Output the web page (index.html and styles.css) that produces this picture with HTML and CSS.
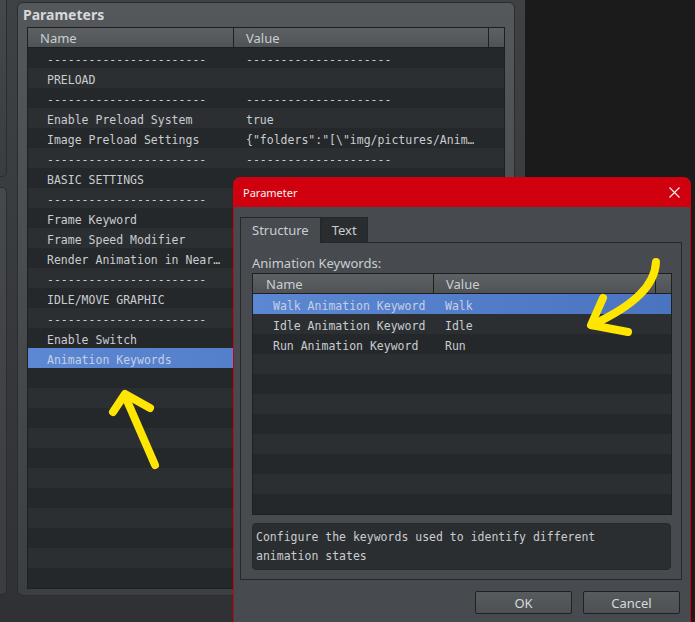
FILE: index.html
```html
<!DOCTYPE html>
<html lang="en">
<head>
    <meta charset="UTF-8">
    <meta name="viewport" content="width=device-width, initial-scale=1.0">
    <title>Plugin Parameters</title>
    <link rel="stylesheet" href="styles.css">
</head>
<body>
    <div class="app">
        <!-- Neighbouring panels, mostly off screen -->
        <div class="side">
            <div class="side-box side-top"></div>
            <div class="side-box side-bottom"></div>
        </div>

        <!-- Parameters group -->
        <div class="group">
            <div class="group-title">Parameters</div>
            <div class="grid main-grid">
                <div class="grid-head">
                    <div class="head-cell main-name">Name</div>
                    <div class="head-cell main-value">Value</div>
                    <div class="head-cell head-end"></div>
                </div>
                <div class="grid-body" id="paramRows"></div>
            </div>
        </div>
    </div>

    <!-- Parameter edit dialog -->
    <div class="dialog">
        <div class="dialog-title">
            <span>Parameter</span>
            <svg class="close" width="11" height="11" viewBox="0 0 11 11">
                <path d="M0.5 0.5 L10.5 10.5 M10.5 0.5 L0.5 10.5" stroke="#f4f4f4" stroke-width="1.1" fill="none"/>
            </svg>
        </div>
        <div class="dialog-body">
            <div class="tabs">
                <div class="tab active">Structure</div>
                <div class="tab">Text</div>
            </div>
            <div class="tab-pane">
                <div class="pane-label">Animation Keywords:</div>
                <div class="grid dialog-grid">
                    <div class="grid-head">
                        <div class="head-cell dlg-name">Name</div>
                        <div class="head-cell dlg-value">Value</div>
                        <div class="head-cell head-end"></div>
                    </div>
                    <div class="grid-body" id="keywordRows"></div>
                </div>
                <div class="description">Configure the keywords used to identify different<br>animation states</div>
            </div>
            <div class="buttons">
                <button class="btn">OK</button>
                <button class="btn">Cancel</button>
            </div>
        </div>
    </div>

    <!-- Hand drawn pointers -->
    <svg class="marks" width="695" height="622" viewBox="0 0 695 622">
        <g stroke="#ffe600" stroke-width="8" stroke-linecap="round" stroke-linejoin="round" fill="none">
            <path d="M155 465 L125 396"/>
            <path d="M113 412 L125 394 L150 408"/>
            <path d="M656 262 C655 285 635 305 592 325"/>
            <path d="M603 298 L591 325 L628 332"/>
        </g>
    </svg>

    <script>
        const dash = '-'.repeat(23);
        const dashValue = '-'.repeat(21);

        // values of the lower rows sit under the open dialog, so they stay blank
        const params = [
            [dash, dashValue],
            ['PRELOAD', ''],
            [dash, dashValue],
            ['Enable Preload System', 'true'],
            ['Image Preload Settings', '{"folders":"[\\"img/pictures/Anim…'],
            [dash, dashValue],
            ['BASIC SETTINGS', ''],
            [dash, ''],
            ['Frame Keyword', ''],
            ['Frame Speed Modifier', ''],
            ['Render Animation in Near…', ''],
            [dash, ''],
            ['IDLE/MOVE GRAPHIC', ''],
            [dash, ''],
            ['Enable Switch', ''],
            ['Animation Keywords', '']
        ];

        const keywords = [
            ['Walk Animation Keyword', 'Walk'],
            ['Idle Animation Keyword', 'Idle'],
            ['Run Animation Keyword', 'Run']
        ];

        function fillRows(id, rows, total, selected) {
            const body = document.getElementById(id);
            let html = '';
            for (let i = 0; i < total; i++) {
                const row = rows[i] || ['', ''];
                const cls = 'row' + (i % 2 ? ' odd' : '') + (i === selected ? ' selected' : '');
                html += `<div class="${cls}"><div class="cell cell-name">${row[0]}</div><div class="cell cell-value">${row[1]}</div></div>`;
            }
            body.innerHTML = html;
        }

        fillRows('paramRows', params, 27, 15);
        fillRows('keywordRows', keywords, 11, 0);
    </script>
</body>
</html>
```

FILE: styles.css
```css
body {
    margin: 0;
    width: 695px;
    height: 622px;
    overflow: hidden;
    background-color: #1b1b1b;
    font-family: "Noto Sans", sans-serif;
    color: #c8cdd2;
    position: relative;
}

/* Main window area */
.app {
    display: flex;
    width: 525px;
    height: 622px;
    background: linear-gradient(#3f4245, #2f3134);
}

.side {
    display: flex;
    flex-direction: column;
    gap: 10px;
    width: 6px;
    margin-top: -6px;
}

.side-box {
    margin-left: -10px;
    width: 15px;
    border: 1px solid #2a2c2e;
    border-radius: 0 5px 5px 0;
    background: linear-gradient(#46494c, #3a3d40);
}

.side-top {
    height: 181px;
}

.side-bottom {
    height: 406px;
}

/* Parameters group box */
.group {
    margin: 2px 0 0 11px;
    width: 498px;
    height: 594px;
    box-sizing: border-box;
    border: 1px solid #2a2c2e;
    border-radius: 6px;
    background: linear-gradient(#55585b, #3c3f42);
    overflow: hidden;
}

.group-title {
    padding: 2px 5px 0;
    height: 20px;
    line-height: 20px;
    font-size: 14px;
    font-weight: bold;
    color: #d4d8dc;
}

/* Shared list grid */
.grid {
    border: 1px solid #1d1f21;
    background: #25282a;
}

.main-grid {
    margin: 2px 0 0 9px;
    width: 478px;
    box-sizing: border-box;
}

.grid-head {
    display: flex;
    height: 19px;
    border-bottom: 1px solid #1d1f21;
    background: linear-gradient(#5d6164, #4f5356);
}

.head-cell {
    box-sizing: border-box;
    border-right: 1px solid #1d1f21;
    font-size: 13px;
    line-height: 21px;
    color: #c9ced3;
    padding-left: 12px;
}

.head-end {
    flex: 1;
    border-right: none;
}

.main-name { width: 206px; }
.main-value { width: 255px; }

.row {
    display: flex;
    height: 20px;
    background: #25282a;
}

.row.odd {
    background: #2c2f32;
}

.row.selected {
    background: linear-gradient(to right, #5b87d3, #4b74c0);
}

.row.selected .cell {
    color: #c5d0e4;
}

.cell {
    height: 18px;
    padding-top: 2px;
    font-family: "DejaVu Sans Mono", monospace;
    font-size: 11.5px;
    line-height: 20px;
    color: #c9ccd0;
    white-space: pre;
    overflow: hidden;
}

.main-grid .cell-name {
    width: 187px;
    padding-left: 19px;
}

.main-grid .cell-value {
    padding-left: 12px;
}

/* Dialog window */
.dialog {
    position: absolute;
    left: 233px;
    top: 177px;
    width: 458px;
    height: 470px;
    box-sizing: border-box;
    border: 1px solid #d0000f;
    border-radius: 7px 7px 0 0;
    background: #474b4f;
}

.dialog-title {
    display: flex;
    align-items: center;
    justify-content: space-between;
    height: 29px;
    padding: 0 10px 0 9px;
    background: #d0000f;
    border-radius: 6px 6px 0 0;
    font-size: 11px;
    color: #f4f4f4;
}

.dialog-body {
    padding: 10px 8px 0 6px;
}

.tabs {
    display: flex;
    align-items: flex-end;
}

.tab {
    height: 24px;
    padding: 0 10px;
    border: 1px solid #25282a;
    border-bottom: none;
    font-size: 13px;
    line-height: 24px;
    color: #c9ced3;
    background: #2a2d30;
}

.tab.active {
    height: 25px;
    padding: 0 11px;
    background: #474b4f;
    margin-bottom: -1px;
    position: relative;
    z-index: 1;
}

.tab-pane {
    height: 338px;
    box-sizing: border-box;
    border: 1px solid #25282a;
    padding: 11px 9px 0 11px;
}

.pane-label {
    font-size: 13px;
    line-height: 18px;
    color: #c9ced3;
    margin-bottom: 1px;
}

.dialog-grid {
    width: 420px;
    height: 242px;
    box-sizing: border-box;
    overflow: hidden;
}

.dlg-name {
    width: 181px;
    padding-left: 13px;
}

.dlg-value {
    width: 222px;
}

.dialog-grid .cell-name {
    width: 161px;
    padding-left: 20px;
}

.dialog-grid .cell-value {
    padding-left: 11px;
}

.description {
    margin-top: 8px;
    width: 419px;
    height: 47px;
    box-sizing: border-box;
    padding: 4px 3px;
    border: 1px solid #26292b;
    border-radius: 4px;
    background: #2b2e31;
    font-family: "DejaVu Sans Mono", monospace;
    font-size: 11.5px;
    line-height: 19px;
    color: #c9ccd0;
}

.buttons {
    display: flex;
    justify-content: flex-end;
    gap: 11px;
    margin: 11px 2px 0 0;
}

.btn {
    width: 97px;
    height: 23px;
    border: 1px solid #1f2123;
    border-radius: 2px;
    background: linear-gradient(#575b5e, #4d5154);
    font-family: "Noto Sans", sans-serif;
    font-size: 13px;
    color: #d6d9dc;
    padding: 0;
}

/* Pointer overlay */
.marks {
    position: absolute;
    left: 0;
    top: 0;
    pointer-events: none;
}
```
